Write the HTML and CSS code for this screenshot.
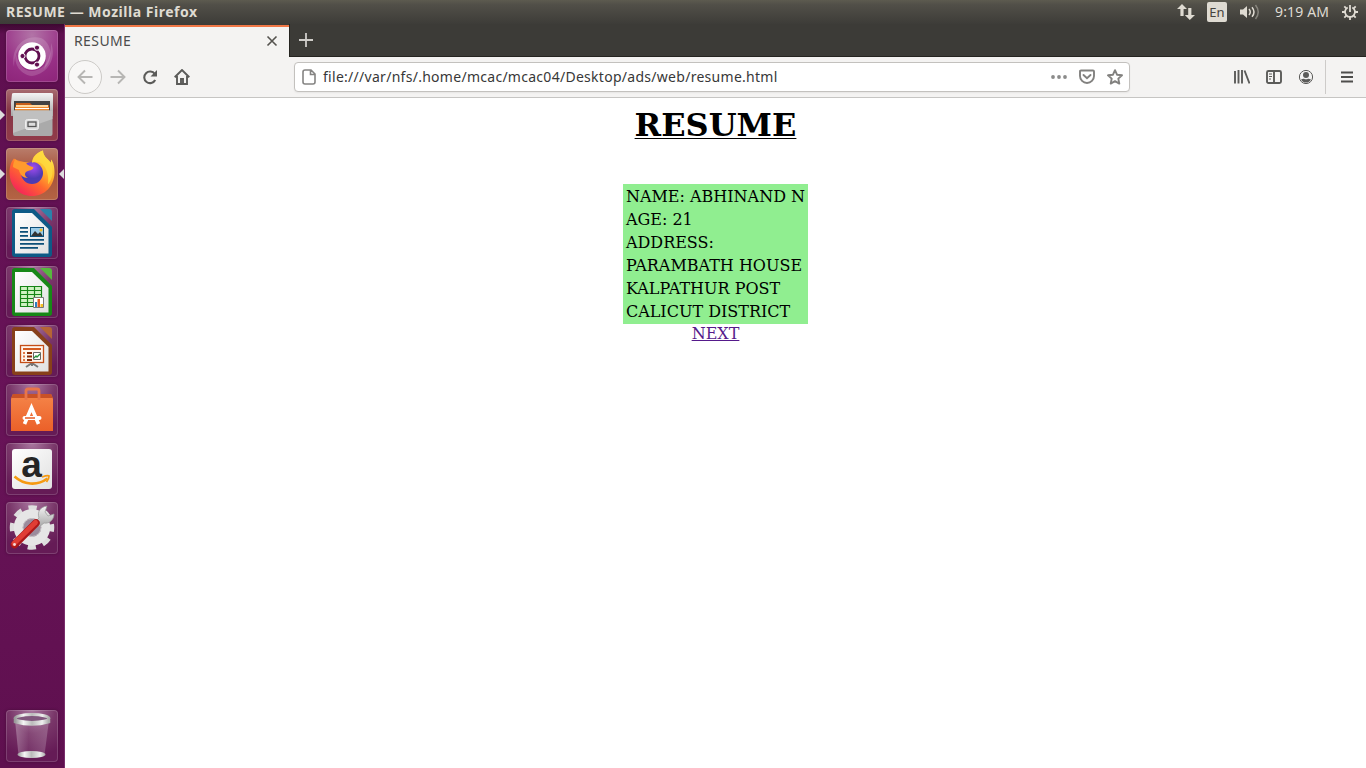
FILE: index.html
```html
<!DOCTYPE html>
<html lang="en">
<head>
<meta charset="utf-8">
<title>RESUME</title>
<link rel="stylesheet" href="styles.css">
</head>
<body>
<svg class="defs" width="0" height="0" aria-hidden="true">
  <defs>
    <linearGradient id="metal" x1="0" y1="0" x2="0" y2="1"><stop offset="0" stop-color="#f4f4f4"/><stop offset="1" stop-color="#a7a7a7"/></linearGradient>
    <linearGradient id="paper" x1="0" y1="0" x2="1" y2="1"><stop offset="0" stop-color="#fff"/><stop offset="1" stop-color="#e1e1e1"/></linearGradient>
    <linearGradient id="flame" x1=".9" y1=".05" x2=".2" y2=".95"><stop offset="0" stop-color="#fff14f"/><stop offset=".35" stop-color="#ffb52b"/><stop offset=".62" stop-color="#ff682e"/><stop offset="1" stop-color="#f5225b"/></linearGradient>
    <radialGradient id="globe" cx=".55" cy=".25"><stop offset="0" stop-color="#a34bf0"/><stop offset="1" stop-color="#4c3bb3"/></radialGradient>
    <linearGradient id="bag" x1="0" y1="0" x2="0" y2="1"><stop offset="0" stop-color="#f58549"/><stop offset="1" stop-color="#eb6029"/></linearGradient>
    <linearGradient id="rim" x1="0" y1="0" x2="1" y2="0"><stop offset="0" stop-color="#999"/><stop offset=".25" stop-color="#f5f5f5"/><stop offset=".5" stop-color="#bbb"/><stop offset=".8" stop-color="#eee"/><stop offset="1" stop-color="#aaa"/></linearGradient>
    <linearGradient id="glass" x1="0" y1="0" x2="1" y2="0"><stop offset="0" stop-color="#fff" stop-opacity=".3"/><stop offset=".4" stop-color="#fff" stop-opacity=".08"/><stop offset="1" stop-color="#fff" stop-opacity=".22"/></linearGradient>
  </defs>
</svg>
<header class="panel">
  <span class="panel-title">RESUME — Mozilla Firefox</span>
  <div class="indicators">
    <svg class="net" width="18" height="18" viewBox="0 0 18 18"><path fill="#dfdbd2" d="M5 1l5 5H6.600v7H3.400V6H0zM12.800 17l-5-5h3.400V5h3.200v7H18z"/></svg>
    <span class="lang">En</span>
    <svg class="vol" width="20" height="18" viewBox="0 0 20 18"><path fill="#dfdbd2" d="M0 6.500h3L7 3v12l-4-3.500H0z"/><g fill="none" stroke="#dfdbd2" stroke-width="1.500"><path d="M9 6q2.500 3 0 6"/><path d="M12 4.200q4 4.800 0 9.600"/><path d="M15.500 2q5.500 7 0 14" opacity=".4"/></g></svg>
    <span class="clock">9:19 AM</span>
    <svg class="power" width="16" height="16" viewBox="0 0 16 16" fill="none" stroke="#dfdbd2"><path stroke-width="1.800" d="M5.700 3.500a5 5 0 1 0 4.600 0"/><path stroke-width="1.800" d="M8 1v7M8 13v3M0 8h3M13 8h3M2.300 2.300l2 2M13.700 2.300l-2 2M2.300 13.700l2-2M13.700 13.700l-2-2"/></svg>
  </div>
</header>
<div class="desktop">
  <nav class="launcher">
    <div class="tile dash"><svg viewBox="0 0 52 52"><g fill="#fff"><path opacity=".16" d="M8 37C4 18 18 4 35 8c11 5 13 22 3 31 5-13 2-24-12-27C14 13 8 23 8 37z"/><path opacity=".16" d="M45 13c6 15-3 31-19 33-11-1-19-12-16-22 2 10 8 18 17 17 14-2 18-14 18-28z"/><circle cx="26" cy="26" r="13.800"/></g><circle cx="26" cy="26" r="7" fill="none" stroke="#610e50" stroke-width="2.800"/><g fill="#610e50" stroke="#fff" stroke-width="1"><circle cx="16.500" cy="26" r="2.600"/><circle cx="31" cy="17.700" r="2.600"/><circle cx="31" cy="34.600" r="2.600"/></g></svg></div>
    <div class="tile files"><i class="pip left"></i><svg viewBox="0 0 52 52"><path d="M6 5q0-1 2-1h37q2 0 2 1v22H5V14z" fill="url(#metal)"/><path d="M8 12h36v11H8z" fill="#424242"/><path d="M10 14h14l2 2h17v8H9z" fill="#c85e18"/><path d="M10 16h32v2H10z" fill="#ffd9a0"/><path d="M9 18h34v4H9z" fill="#ed8b32"/><path d="M9 19h34v1H9z" fill="#fff"/><path d="M7 21.500h39.500V45q0 2-2 2H9q-2 0-2-2z" fill="#aaa"/><path d="M7 21.500h39.500V30L7 44z" fill="#c0c0c0"/><rect x="19.500" y="30.500" width="13" height="10" rx="2" fill="#ddd" stroke="#eee"/><rect x="22" y="33" width="8" height="4.500" fill="#ddd" stroke="#555" stroke-width="1.300"/></svg></div>
    <div class="tile firefox"><i class="pip left"></i><i class="pip right"></i><svg viewBox="0 0 52 52"><path d="M37 2.500C28 6 26.500 10 26 15L18 14l-8-2-2-1.500C4.500 14 3.500 20 3.500 25 4 39 14 48 26 48c13 0 22-10 22.500-23C48.700 20 47.500 14 45 11.500v3C41 10 37 8 37 2.500z" fill="url(#flame)"/><circle cx="26" cy="25" r="11" fill="url(#globe)"/><path d="M9.500 11c2 2.500 4 3.500 8 3 2 0 4 4 9.500 5 1 1.500-1 3-5 4-4 1-4 5 0 7-5 0-8-3-9-8L7 19c0-3 1-6 2.500-8z" fill="#ff9a2e"/><path d="M26 15c1-6 4-10 11-12.500 0 5.500 4 7.500 7 12 4 7 3 16-2 22 1-9-1-18-8-22-3-1-6-1-8 .5z" fill="#ffd93e" opacity=".8"/></svg></div>
    <div class="tile office"><svg viewBox="0 0 52 52"><path d="M9 2h19l18 18v27q0 3-3 3H9q-3 0-3-3V5q0-3 3-3z" fill="#0d5a86"/><path d="M9 6h17l16.500 16v24.500H9z" fill="url(#paper)"/><path d="M34 2h9q3 0 3 3v9z" fill="#2b82aa"/><g stroke="#0d4f78" stroke-width="1.800"><path d="M14 20.900h8M14 24.900h8M14 28.900h8M14 32.900h24M14 36.900h24M14 40.900h18"/></g><rect x="24.500" y="20.500" width="13" height="9" fill="#9ccce8" stroke="#0d4f78"/><path d="M25 29l4-5 3 3 2-2 3 4z" fill="#333"/><circle cx="35" cy="23" r="1.500" fill="#f5bd25"/></svg></div>
    <div class="tile office"><svg viewBox="0 0 52 52"><path d="M9 2h19l18 18v27q0 3-3 3H9q-3 0-3-3V5q0-3 3-3z" fill="#178817"/><path d="M9 6h17l16.500 16v24.500H9z" fill="url(#paper)"/><path d="M34 2h9q3 0 3 3v9z" fill="#57b83e"/><g stroke="#168516" stroke-width="1.200"><path fill="#cff2c2" d="M14.500 20.500h21v20h-21z"/><path d="M14 24.500h22M14 28.500h22M14 32.500h22M14 36.500h22M21.500 20v20M28.500 20v20"/></g><path fill="#fff" stroke="#777" d="M27.500 31.500h10v10h-10z"/><path fill="#2b7ec0" d="M29 36h2v5h-2z"/><path fill="#e35b1d" d="M31.500 33h2.500v8h-2.500z"/><path fill="#f5bf22" d="M34.500 38H37v3h-2.500z"/></svg></div>
    <div class="tile office"><svg viewBox="0 0 52 52"><path d="M9 2h19l18 18v27q0 3-3 3H9q-3 0-3-3V5q0-3 3-3z" fill="#87401a"/><path d="M9 6h17l16.500 16v24.500H9z" fill="url(#paper)"/><path d="M34 2h9q3 0 3 3v9z" fill="#b56535"/><path d="M26 38v3M26 38l-6 4M26 38l6 4" stroke="#777" stroke-width="2"/><rect x="14.500" y="20.500" width="23" height="17" fill="#fff5ec" stroke="#c44e18" stroke-width="1.300"/><path d="M17 24h18" stroke="#d45b20" stroke-width="2"/><path d="M17 28h2M17 31.500h2M17 35h2" stroke="#e27643" stroke-width="2"/><path d="M21 28h5M21 31.500h5M21 35h5" stroke="#8a2d08" stroke-width="1.800"/><path fill="#fff" stroke="#666" d="M27.500 27.500h7v7h-7z"/><path d="M28 33l2-2 1 1 3-3" fill="none" stroke="#24913a" stroke-width="1.300"/></svg></div>
    <div class="tile store"><svg viewBox="0 0 52 52"><path d="M7 10h38l2 5v32H5V15z" fill="url(#bag)"/><path d="M5 14l2-4h38l2 4z" fill="#c95126"/><path d="M20 16V7q0-2 2-2h9q2 0 2 2v9" fill="none" stroke="#e87549" stroke-width="2.800"/><g fill="none" stroke="#fff"><path d="M18.500 40L25.500 23.500 32.500 40" stroke-width="3.600"/><path d="M18.500 34h15" stroke-width="4" stroke-linecap="round"/></g><path d="M19 34h10" stroke="#e65b24" stroke-width="1.500"/></svg></div>
    <div class="tile amazon"><svg viewBox="0 0 52 52"><rect x="6" y="6" width="40" height="40" rx="3" fill="url(#paper)"/><text x="25.500" y="34" text-anchor="middle" class="amazon-letter">a</text><path d="M8.500 33.500c9 8 22 10 33 2" fill="none" stroke="#f59a12" stroke-width="2.600"/><path d="M36 34q6-2 7-1 0 3-2.500 6" fill="none" stroke="#f59a12" stroke-width="1.800"/></svg></div>
    <div class="tile settings"><svg viewBox="0 0 52 52"><circle cx="26" cy="25.500" r="19" fill="none" stroke="#dedede" stroke-width="6.500" stroke-dasharray="8 6.923" stroke-dashoffset="4"/><circle cx="26" cy="25.500" r="13.700" fill="none" stroke="#e6e6e6" stroke-width="9"/><circle cx="26" cy="25.500" r="9" fill="#9b8b9c" stroke="#c8c8c8"/><path d="M29 20l4-4c-2-6 1-11 8-12l-2 6 3 4 6-2c0 6-5 10-10 9l-5 4z" fill="url(#metal)" stroke="#999" stroke-width=".7"/><path d="M8.500 42.500L30 21" stroke="#ac1719" stroke-width="7.500" stroke-linecap="round"/><path d="M8 41.500L29.500 20.500" stroke="#e03d34" stroke-width="5" stroke-linecap="round"/><circle cx="8.500" cy="42.500" r="1.400" fill="#f3dddd"/></svg></div>
    <div class="tile trash"><svg viewBox="0 0 52 52"><path d="M9 10l3.500 35q13 6 26 0L43 10z" fill="url(#glass)"/><ellipse cx="25.500" cy="44.500" rx="14" ry="3.500" fill="url(#rim)"/><ellipse cx="26" cy="8.500" rx="17" ry="4" fill="#81577d" stroke="url(#rim)" stroke-width="3"/><path d="M9 10v2q17 5 34 0v-2" fill="none" stroke="url(#rim)" stroke-width="2.500"/></svg></div>
  </nav>
  <main class="browser">
    <div class="tabs">
      <div class="tab"><span class="tab-name">RESUME</span><svg width="12" height="12" viewBox="0 0 12 12"><path d="M1.500 1.500l9 9M10.500 1.500l-9 9" stroke="#55534f" stroke-width="1.600"/></svg></div>
      <svg class="plus" width="14" height="14" viewBox="0 0 14 14"><path d="M7 0v14M0 7h14" stroke="#cfcdc9" stroke-width="1.800"/></svg>
    </div>
    <div class="toolbar">
      <span class="back"><svg width="16" height="16" viewBox="0 0 16 16" class="ico faded"><path d="M8 1.500L1.500 8 8 14.500M2 8h13.500"/></svg></span>
      <svg width="16" height="16" viewBox="0 0 16 16" class="ico faded fwd"><path d="M8 1.500L14.500 8 8 14.500M14 8H.5"/></svg>
      <svg width="16" height="16" viewBox="0 0 16 16" class="ico reload"><path d="M12.800 5A5.800 5.800 0 1 0 13.200 11" stroke-width="2.100"/><path d="M15 1v6.500H8.500z" fill="#5b5b59" stroke="none"/></svg>
      <svg width="16" height="16" viewBox="0 0 16 16" class="ico home"><path d="M.7 8.200L8 1l7.300 7.200M3 7v8h10V7"/><path d="M7 14.500V10h2v4.500"/></svg>
      <div class="url">
        <svg width="14" height="16" viewBox="0 0 14 16" class="ico page"><path d="M3 1h6l4 4v8q0 2-2 2H3q-2 0-2-2V3q0-2 2-2zM8.500 1v4.500H13"/></svg>
        <span class="address">file:///var/nfs/.home/mcac/mcac04/Desktop/ads/web/resume.html</span>
        <svg width="16" height="16" viewBox="0 0 16 16" class="dots"><g fill="#8b8b8a"><circle cx="2" cy="8" r="1.900"/><circle cx="8" cy="8" r="1.900"/><circle cx="14" cy="8" r="1.900"/></g></svg>
        <svg width="16" height="16" viewBox="0 0 16 16" class="ico light pocket"><path d="M2 1.500h12q1 0 1 1V7A7 7 0 0 1 1 7V2.500q0-1 1-1zM4.500 6L8 9.300 11.500 6" stroke-linecap="round"/></svg>
        <svg width="16" height="16" viewBox="0 0 16 16" class="ico light star"><path d="M8 1.200l2 4.500 5 .6-3.700 3.300 1 5L8 12.100l-4.300 2.500 1-5L1 6.300l5-.6z" stroke-linejoin="round"/></svg>
      </div>
      <svg width="16" height="16" viewBox="0 0 16 16" class="ico library"><path d="M1 2v12.500M4.500 1v13.500M8 1v13.500M10.500 1.500l5 13" stroke-width="1.900"/></svg>
      <svg width="16" height="16" viewBox="0 0 16 16" class="ico side"><rect x="1" y="2" width="14" height="12" rx="1.500"/><path d="M8 2v12"/><path d="M3 5h3M3 7.500h3M3 10h2" stroke-width="1"/></svg>
      <svg width="16" height="16" viewBox="0 0 16 16" class="account"><circle cx="8" cy="8" r="6.600" fill="none" stroke="#5b5b59" stroke-width="1"/><circle cx="8" cy="6" r="3" fill="#5b5b59"/><path d="M3 10.500q2-1 3-.7 2 1 4 0 1-.3 3 .7a5.600 5.600 0 0 1-10 0z" fill="#5b5b59"/></svg>
      <span class="divider"></span>
      <svg width="12" height="12" viewBox="0 0 12 12" class="menu"><path d="M0 1.500h12M0 6h12M0 10.500h12" stroke="#4e4e4c" stroke-width="1.800"/></svg>
    </div>
    <section class="page-content">
      <h1>RESUME</h1>
      <table class="details">
        <tr><td>NAME: ABHINAND N</td></tr>
        <tr><td>AGE: 21</td></tr>
        <tr><td>ADDRESS:</td></tr>
        <tr><td>PARAMBATH HOUSE</td></tr>
        <tr><td>KALPATHUR POST</td></tr>
        <tr><td>CALICUT DISTRICT</td></tr>
      </table>
      <a class="next" href="#">NEXT</a>
    </section>
  </main>
</div>
</body>
</html>
```
FILE: styles.css
```css
* { box-sizing: border-box; }
body { margin: 0; width: 1366px; height: 768px; overflow: hidden; background: #fff; font-family: "Noto Sans", "Open Sans", sans-serif; }
svg { display: block; flex: none; }
.defs { position: absolute; }

.panel { height: 24px; display: flex; align-items: center; justify-content: space-between; padding: 0 8px 0 6px; background: linear-gradient(#5d5b4f, #514f48 20%, #3d3c38); color: #dfdbd2; white-space: nowrap; }
.panel-title { font-size: 14px; font-weight: 700; line-height: 24px; letter-spacing: .52px; }
.indicators { display: flex; align-items: center; height: 24px; }
.net { margin-right: 12px; }
.lang { width: 20px; height: 20px; margin-right: 13px; border-radius: 2px; background: #dfdbd2; color: #45433e; font-size: 13px; line-height: 20px; text-align: center; }
.vol { margin-right: 15px; }
.clock { width: 54px; margin-right: 13px; font-size: 14px; line-height: 24px; letter-spacing: .15px; }

.desktop { display: flex; height: 744px; }
.launcher { width: 65px; flex: none; display: flex; flex-direction: column; gap: 7px; padding: 6px 7px 6px 6px; background: linear-gradient(90deg, transparent 64px, #792d6b 64px), linear-gradient(#3d0831, #5e0f4f 10px, #681358 50%, #5f104f); }
.tile { position: relative; width: 52px; height: 52px; flex: none; border-radius: 4px; background: radial-gradient(circle at 50% 0, #a9779f, #793669 40%, #651b56 80%); box-shadow: inset 0 0 0 1px rgba(255,255,255,.16), 0 0 3px rgba(25,0,20,.35); }
.tile svg { width: 52px; height: 52px; }
.dash { background: radial-gradient(circle at 50% 10%, #b274a7, #983086 60%, #8d2479); }
.files { background: linear-gradient(#a86c70, #863647 40%, #913b49); }
.firefox { background: linear-gradient(#b97d6b, #a6523a 45%, #b46444); }
.trash { margin-top: auto; }
.pip { position: absolute; top: 21px; border: 5px solid transparent; }
.left { left: -6px; border-left-color: #ddd; border-right: 0; }
.right { right: -6px; border-right-color: #ddd; border-left: 0; }
.amazon-letter { font: bold 37px "Liberation Sans", sans-serif; fill: #252525; }

.browser { flex: 1; min-width: 0; display: flex; flex-direction: column; }
.tabs { height: 33px; display: flex; background: #3c3b37; border-bottom: 1px solid #252420; }
.tab { width: 225px; height: 33px; display: flex; align-items: center; justify-content: space-between; padding: 0 11px 0 9px; background: linear-gradient(#3c3b37 1px, #f07746 1px, #f07746 3px, #f4f3f2 3px); border-right: 1px solid #252420; }
.tab-name { font-size: 14px; line-height: 20px; letter-spacing: .4px; color: #4c4c4c; }
.plus { margin: 9px 0 0 9px; }
.toolbar { height: 41px; display: flex; align-items: center; background: #f4f3f2; border-bottom: 1px solid #c6c5c3; }
.ico { fill: none; stroke: #5b5b59; stroke-width: 1.900; }
.faded { stroke: #b7b6b4; }
.light { stroke: #82817f; }
.back { width: 34px; height: 34px; display: flex; align-items: center; justify-content: center; margin-left: 3px; border: 1px solid #cccac7; border-radius: 50%; background: #f8f7f6; }
.fwd { margin-left: 8px; }
.reload { margin-left: 16px; }
.home { margin-left: 16px; }
.url { width: 836px; height: 30px; display: flex; align-items: center; margin-left: 104px; padding: 0 6px 0 7px; border: 1px solid #c3c1be; border-radius: 4px; background: #fff; box-shadow: 0 1px 2px rgba(0,0,0,.06); }
.page { stroke: #858483; stroke-width: 1.600; }
.address { flex: 1; margin-left: 7px; font-size: 14px; line-height: 28px; letter-spacing: .28px; white-space: nowrap; color: #383838; }
.dots, .pocket { margin-right: 12px; }
.library { margin-left: 104px; }
.side { margin-left: 16px; }
.account { margin-left: 16px; }
.divider { width: 1px; height: 34px; margin-left: 11px; background: #cdcbc9; }
.menu { margin-left: 15px; }

.page-content { flex: 1; display: flex; flex-direction: column; align-items: center; padding-top: 9px; background: #fff; color: #000; font: 16px "DejaVu Serif", serif; }
.page-content h1 { margin: 0 0 40px; font-size: 32px; line-height: 37px; text-decoration: underline; text-decoration-thickness: 1px; text-underline-offset: 2px; text-decoration-skip-ink: none; }
.details { border-spacing: 2px; background: #90ee90; }
.details td { padding: 1px; line-height: 19px; }
.next { line-height: 19px; color: #551a8b; }
```
